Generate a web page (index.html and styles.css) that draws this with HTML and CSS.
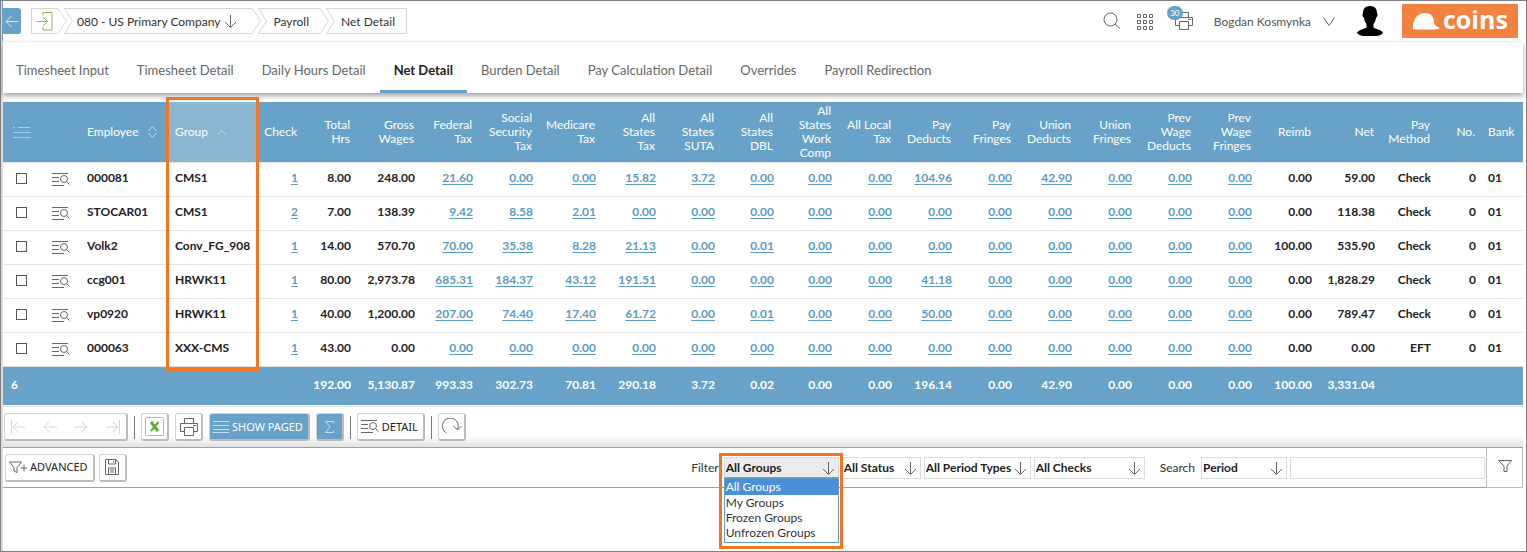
FILE: index.html
```html
<!DOCTYPE html>
<html lang="en">
<head>
<meta charset="utf-8">
<title>Payroll - Net Detail</title>
<link rel="stylesheet" href="styles.css">
</head>
<body>
<svg class="defs" aria-hidden="true">
  <symbol id="down" viewBox="0 0 13 15"><path d="M6.500 1v12M1 8l5.500 5.500L12 8"/></symbol>
  <symbol id="detail" viewBox="0 0 18 13"><path d="M0 .5h16M0 4.500h7M0 8.500h7M0 12.500h12"/><circle cx="12" cy="6" r="3.500"/><path d="M14.500 8.500L17.500 11.500"/></symbol>
  <symbol id="printer" viewBox="0 0 18 18"><path d="M4.500 5V.5h9V5M4.500 13.500h-4V5.500h17v8h-4M4.500 9.500h9v8h-9zM13 7.500h3"/></symbol>
  <symbol id="notch" viewBox="0 0 9 26"><path d="M0 .5h9M0 25.500h9M.5 .5L8.500 13L.5 25.500"/></symbol>
  <symbol id="point" viewBox="0 0 9 26"><path d="M0 .5L8.500 13L0 25.500"/></symbol>
</svg>
<div class="app">
  <header class="topbar">
    <button class="back" aria-label="Back"><svg width="14" height="13" viewBox="0 0 14 13"><path d="M13.500 6.500H1M6.500 1L1 6.500L6.500 12"/></svg></button>
    <nav class="crumbs" aria-label="Breadcrumb">
      <a class="crumb" href="#" aria-label="Home"><span class="crumb-body crumb-home"><svg class="exit" width="16" height="19" viewBox="0 0 16 19"><path d="M6 3.500V.5h9v17.500H6V15M0 9.500h10M6 5l4.500 4.500L6 14"/></svg></span><svg class="cap"><use href="#point"/></svg></a>
      <a class="crumb" href="#"><svg class="cap"><use href="#notch"/></svg><span class="crumb-body crumb-company">080 - US Primary Company<svg width="13" height="15"><use href="#down"/></svg></span><svg class="cap"><use href="#point"/></svg></a>
      <a class="crumb" href="#"><svg class="cap"><use href="#notch"/></svg><span class="crumb-body">Payroll</span><svg class="cap"><use href="#point"/></svg></a>
      <a class="crumb crumb-last" href="#"><svg class="cap"><use href="#notch"/></svg><span class="crumb-body">Net Detail</span></a>
    </nav>
    <div class="tools">
      <button class="plain" aria-label="Search"><svg width="18" height="18" viewBox="0 0 18 18"><circle cx="7.500" cy="7.500" r="6.500"/><path d="M12 12l5 4.500"/></svg></button>
      <button class="plain" aria-label="Applications"><svg width="16" height="17" viewBox="0 0 16 17"><path d="M.5 1.500h3v3h-3zM6.500 1.500h3v3h-3zM12.500 1.500h3v3h-3zM.5 7.500h3v3h-3zM6.500 7.500h3v3h-3zM12.500 7.500h3v3h-3zM.5 13.500h3v3h-3zM6.500 13.500h3v3h-3zM12.500 13.500h3v3h-3z"/></svg></button>
      <button class="plain print-queue" aria-label="Print queue"><svg width="18" height="18"><use href="#printer"/></svg><span class="badge">30</span></button>
      <button class="plain user">Bogdan Kosmynka<svg width="12" height="9" viewBox="0 0 12 9"><path d="M.5 .5L6 8.500L11.500 .5"/></svg></button>
      <svg class="avatar" width="26" height="30" viewBox="0 0 26 30"><path d="M13 0c5 0 7 3 7 7 1 1 .5 4-.8 4.500C18.500 15 17.500 17 16.500 18v3.500c3 2 8 2 9.500 5.500-2 2-4 3-7 3H7c-3 0-5-1-7-3 1.500-3.500 6.500-3.500 9.500-5.500V18c-1-1-2-3-2.700-6.500C5.500 11 5 8 6 7c0-4 2-7 7-7z"/></svg>
      <div class="logo"><svg width="28" height="17" viewBox="0 0 28 17"><path d="M1 16.500C0 7 5 0 13 0c6 0 9 4 9 9.500 0 2 2 4 6 5.500-2 2-8 1.500-14 1.500z"/></svg><span>coins</span></div>
    </div>
  </header>
  <nav class="tabs" aria-label="Payroll sections">
    <a href="#">Timesheet Input</a><a href="#">Timesheet Detail</a><a href="#">Daily Hours Detail</a><a href="#" class="active" aria-current="page">Net Detail</a><a href="#">Burden Detail</a><a href="#">Pay Calculation Detail</a><a href="#">Overrides</a><a href="#">Payroll Redirection</a>
  </nav>
  <main>
    <table class="grid">
      <colgroup><col class="c-check"><col class="c-icon"><col class="c-emp"><col class="c-group"><col class="c-chk"><col class="c-hrs"><col class="c-gross"><col class="c-58"><col class="c-60"><col class="c-63"><col class="c-60"><col class="c-59"><col class="c-59"><col class="c-58"><col class="c-60"><col class="c-60"><col class="c-60"><col class="c-60"><col class="c-60"><col class="c-60"><col class="c-60"><col class="c-60"><col class="c-63"><col class="c-pay"><col class="c-no"><col class="c-bank"></colgroup>
      <thead><tr>
        <th class="mid"><svg class="list" width="18" height="12" viewBox="0 0 18 12"><path d="M0 1.500h2M5 1.500h12M0 6.500h18M0 11.500h18"/></svg></th><th></th>
        <th class="left">Employee<svg class="sort" width="9" height="12" viewBox="0 0 9 12"><path d="M.5 5L4.500 .5L8.500 5M.5 7l4 4.500L8.500 7"/></svg></th>
        <th class="left sorted">Group<svg class="sort" width="9" height="5" viewBox="0 0 9 5"><path d="M.5 4.500l4-4l4 4"/></svg><span class="marker"></span></th>
        <th>Check</th><th>Total<br>Hrs</th><th>Gross<br>Wages</th><th>Federal<br>Tax</th><th>Social<br>Security<br>Tax</th><th>Medicare<br>Tax</th><th>All<br>States<br>Tax</th><th>All<br>States<br>SUTA</th><th>All<br>States<br>DBL</th><th>All<br>States<br>Work<br>Comp</th><th>All Local<br>Tax</th><th>Pay<br>Deducts</th><th>Pay<br>Fringes</th><th>Union<br>Deducts</th><th>Union<br>Fringes</th><th>Prev<br>Wage<br>Deducts</th><th>Prev<br>Wage<br>Fringes</th><th>Reimb</th><th>Net</th><th>Pay<br>Method</th><th>No.</th><th class="left">Bank</th>
      </tr></thead>
      <tbody>
        <tr><td class="mid"><input type="checkbox" aria-label="Select 000081"></td><td class="mid"><svg class="row-icon"><use href="#detail"/></svg></td><td class="left">000081</td><td class="left">CMS1</td><td><a href="#">1</a></td><td>8.00</td><td>248.00</td><td><a href="#">21.60</a></td><td><a href="#">0.00</a></td><td><a href="#">0.00</a></td><td><a href="#">15.82</a></td><td><a href="#">3.72</a></td><td><a href="#">0.00</a></td><td><a href="#">0.00</a></td><td><a href="#">0.00</a></td><td><a href="#">104.96</a></td><td><a href="#">0.00</a></td><td><a href="#">42.90</a></td><td><a href="#">0.00</a></td><td><a href="#">0.00</a></td><td><a href="#">0.00</a></td><td>0.00</td><td>59.00</td><td>Check</td><td>0</td><td class="left">01</td></tr>
        <tr><td class="mid"><input type="checkbox" aria-label="Select STOCAR01"></td><td class="mid"><svg class="row-icon"><use href="#detail"/></svg></td><td class="left">STOCAR01</td><td class="left">CMS1</td><td><a href="#">2</a></td><td>7.00</td><td>138.39</td><td><a href="#">9.42</a></td><td><a href="#">8.58</a></td><td><a href="#">2.01</a></td><td><a href="#">0.00</a></td><td><a href="#">0.00</a></td><td><a href="#">0.00</a></td><td><a href="#">0.00</a></td><td><a href="#">0.00</a></td><td><a href="#">0.00</a></td><td><a href="#">0.00</a></td><td><a href="#">0.00</a></td><td><a href="#">0.00</a></td><td><a href="#">0.00</a></td><td><a href="#">0.00</a></td><td>0.00</td><td>118.38</td><td>Check</td><td>0</td><td class="left">01</td></tr>
        <tr><td class="mid"><input type="checkbox" aria-label="Select Volk2"></td><td class="mid"><svg class="row-icon"><use href="#detail"/></svg></td><td class="left">Volk2</td><td class="left">Conv_FG_908</td><td><a href="#">1</a></td><td>14.00</td><td>570.70</td><td><a href="#">70.00</a></td><td><a href="#">35.38</a></td><td><a href="#">8.28</a></td><td><a href="#">21.13</a></td><td><a href="#">0.00</a></td><td><a href="#">0.01</a></td><td><a href="#">0.00</a></td><td><a href="#">0.00</a></td><td><a href="#">0.00</a></td><td><a href="#">0.00</a></td><td><a href="#">0.00</a></td><td><a href="#">0.00</a></td><td><a href="#">0.00</a></td><td><a href="#">0.00</a></td><td>100.00</td><td>535.90</td><td>Check</td><td>0</td><td class="left">01</td></tr>
        <tr><td class="mid"><input type="checkbox" aria-label="Select ccg001"></td><td class="mid"><svg class="row-icon"><use href="#detail"/></svg></td><td class="left">ccg001</td><td class="left">HRWK11</td><td><a href="#">1</a></td><td>80.00</td><td>2,973.78</td><td><a href="#">685.31</a></td><td><a href="#">184.37</a></td><td><a href="#">43.12</a></td><td><a href="#">191.51</a></td><td><a href="#">0.00</a></td><td><a href="#">0.00</a></td><td><a href="#">0.00</a></td><td><a href="#">0.00</a></td><td><a href="#">41.18</a></td><td><a href="#">0.00</a></td><td><a href="#">0.00</a></td><td><a href="#">0.00</a></td><td><a href="#">0.00</a></td><td><a href="#">0.00</a></td><td>0.00</td><td>1,828.29</td><td>Check</td><td>0</td><td class="left">01</td></tr>
        <tr><td class="mid"><input type="checkbox" aria-label="Select vp0920"></td><td class="mid"><svg class="row-icon"><use href="#detail"/></svg></td><td class="left">vp0920</td><td class="left">HRWK11</td><td><a href="#">1</a></td><td>40.00</td><td>1,200.00</td><td><a href="#">207.00</a></td><td><a href="#">74.40</a></td><td><a href="#">17.40</a></td><td><a href="#">61.72</a></td><td><a href="#">0.00</a></td><td><a href="#">0.01</a></td><td><a href="#">0.00</a></td><td><a href="#">0.00</a></td><td><a href="#">50.00</a></td><td><a href="#">0.00</a></td><td><a href="#">0.00</a></td><td><a href="#">0.00</a></td><td><a href="#">0.00</a></td><td><a href="#">0.00</a></td><td>0.00</td><td>789.47</td><td>Check</td><td>0</td><td class="left">01</td></tr>
        <tr><td class="mid"><input type="checkbox" aria-label="Select 000063"></td><td class="mid"><svg class="row-icon"><use href="#detail"/></svg></td><td class="left">000063</td><td class="left">XXX-CMS</td><td><a href="#">1</a></td><td>43.00</td><td>0.00</td><td><a href="#">0.00</a></td><td><a href="#">0.00</a></td><td><a href="#">0.00</a></td><td><a href="#">0.00</a></td><td><a href="#">0.00</a></td><td><a href="#">0.00</a></td><td><a href="#">0.00</a></td><td><a href="#">0.00</a></td><td><a href="#">0.00</a></td><td><a href="#">0.00</a></td><td><a href="#">0.00</a></td><td><a href="#">0.00</a></td><td><a href="#">0.00</a></td><td><a href="#">0.00</a></td><td>0.00</td><td>0.00</td><td>EFT</td><td>0</td><td class="left">01</td></tr>
      </tbody>
      <tfoot><tr><td class="left">6</td><td></td><td></td><td></td><td></td><td>192.00</td><td>5,130.87</td><td>993.33</td><td>302.73</td><td>70.81</td><td>290.18</td><td>3.72</td><td>0.02</td><td>0.00</td><td>0.00</td><td>196.14</td><td>0.00</td><td>42.90</td><td>0.00</td><td>0.00</td><td>0.00</td><td>100.00</td><td>3,331.04</td><td></td><td></td><td></td></tr></tfoot>
    </table>
    <div class="toolbar">
      <div class="btn pager">
        <button class="plain" aria-label="First page"><svg width="14" height="14" viewBox="0 0 14 14"><path d="M.5 0v14M14 7H2M7 2L2 7l5 5"/></svg></button>
        <button class="plain" aria-label="Previous page"><svg width="14" height="14" viewBox="0 0 14 14"><path d="M14 7H1M6 2L1 7l5 5"/></svg></button>
        <button class="plain" aria-label="Next page"><svg width="14" height="14" viewBox="0 0 14 14"><path d="M0 7h13M8 2l5 5l-5 5"/></svg></button>
        <button class="plain" aria-label="Last page"><svg width="14" height="14" viewBox="0 0 14 14"><path d="M13.500 0v14M0 7h12M7 2l5 5l-5 5"/></svg></button>
      </div>
      <span class="sep"></span>
      <button class="btn square" aria-label="Export to Excel"><svg width="19" height="19" viewBox="0 0 19 19"><rect class="xl-frame" x=".5" y=".5" width="18" height="18" rx="1"/><path class="xl-a" d="M6 5l7 9"/><path class="xl-b" d="M13.500 5L6 14"/></svg></button>
      <button class="btn square" aria-label="Print"><svg width="18" height="18"><use href="#printer"/></svg></button>
      <button class="btn blue paged"><svg width="16" height="12" viewBox="0 0 16 12"><path d="M0 .5h16M0 4.500h16M0 8.500h16M0 11.500h16"/></svg>SHOW PAGED</button>
      <button class="btn blue square" aria-label="Totals"><svg width="9" height="12" viewBox="0 0 9 12"><path d="M8.500 2.500v-2H.5L5 6L.5 11.500h8v-2"/></svg></button>
      <span class="sep"></span>
      <button class="btn"><svg width="18" height="13"><use href="#detail"/></svg>DETAIL</button>
      <span class="sep"></span>
      <button class="btn square" aria-label="Refresh"><svg width="21" height="17" viewBox="0 0 21 17"><path d="M5.500 15A8 8 0 1 1 16.500 11.500M12.500 8l4 4l4-4"/></svg></button>
    </div>
    <form class="filterbar">
      <button type="button" class="btn advanced"><svg width="18" height="12" viewBox="0 0 18 12"><path d="M.5 1h12L8 6.500v5L5 10V6.500zM15 3.500v7M11.500 7h6.500"/></svg>ADVANCED</button>
      <button type="button" class="btn square" aria-label="Save filter"><svg width="14" height="16" viewBox="0 0 14 16"><path d="M.5 .5h10L13.500 3v12.500H.5zM3.500 .5V5h7V.5M3.500 15.500V9h7v6.500M5 11h4M5 13h4M8.500 2v1.500"/></svg></button>
      <div class="filters">
        <label for="groups">Filter</label>
        <span class="select w-groups open"><select id="groups"><option>All Groups</option><option>My Groups</option><option>Frozen Groups</option><option>Unfrozen Groups</option></select><svg><use href="#down"/></svg>
          <ul class="menu"><li class="chosen">All Groups</li><li>My Groups</li><li>Frozen Groups</li><li>Unfrozen Groups</li></ul><span class="marker"></span></span>
        <span class="select w-status"><select aria-label="Status"><option>All Status</option></select><svg><use href="#down"/></svg></span>
        <span class="select w-types"><select aria-label="Period types"><option>All Period Types</option></select><svg><use href="#down"/></svg></span>
        <span class="select w-checks"><select aria-label="Checks"><option>All Checks</option></select><svg><use href="#down"/></svg></span>
        <label for="by" class="search-label">Search</label>
        <span class="select w-by"><select id="by"><option>Period</option></select><svg><use href="#down"/></svg></span>
        <input type="text" class="query" aria-label="Search text">
      </div>
      <button type="button" class="funnel" aria-label="Apply filter"><svg width="14" height="12" viewBox="0 0 14 12"><path d="M.5 .5h13L9 6v5.500H6V6z"/></svg></button>
    </form>
  </main>
</div>
</body>
</html>
```
FILE: styles.css
```css
* { box-sizing: border-box; }
body {
  margin: 0;
  font-family: Lato, "Open Sans", sans-serif;
  font-size: 12px;
  color: #333;
  background: #fff;
}
a { color: inherit; text-decoration: none; }
button { font: inherit; color: inherit; margin: 0; cursor: pointer; }
svg { fill: none; stroke: #666; stroke-width: 1; flex: none; }
.defs { display: none; }
.plain { border: 0; background: none; padding: 0; display: flex; align-items: center; }

.app {
  min-height: 100vh;
  border: 1px solid #808080;
  padding: 0 3px 0 2px;
  background: linear-gradient(to right, #dcdcdc 2px, #fff 2px);
}

/* Top bar */
.topbar {
  display: flex;
  align-items: center;
  height: 41px;
  margin-left: -1px;
  padding-right: 5px;
  border-left: 1px solid #68a2c8;
  border-bottom: 1px solid #f3f3f3;
}
.back {
  width: 18px;
  height: 26px;
  padding: 0;
  border: 0;
  border-radius: 0 3px 3px 0;
  background: #68a2c8;
  display: flex;
  align-items: center;
  justify-content: center;
}
.back svg { stroke: #d9ecf7; }
.crumbs { display: flex; margin-left: 10px; }
.crumb { display: flex; height: 26px; }
.crumb + .crumb { margin-left: -3px; }
.cap { width: 9px; height: 26px; stroke: #d6d6d6; }
.crumb-body {
  display: flex;
  align-items: center;
  border: solid #d6d6d6;
  border-width: 1px 0;
  padding: 0 11px 0 6px;
}
.crumb-home { border-left-width: 1px; padding: 0 5px; }
.exit { stroke: #8db46a; }
.crumb-company { padding: 0 15px 0 4px; gap: 4px; }
.crumb-last .crumb-body { border-right-width: 1px; }

.tools { display: flex; align-items: center; margin-left: auto; color: #555; }
.print-queue { position: relative; }
.tools .plain + .plain { margin-left: 16px; }
.tools .plain + .print-queue { margin-left: 22px; }
.tools .plain + .user { margin-left: 21px; gap: 12px; }
.badge {
  position: absolute;
  left: -8px;
  top: -6px;
  width: 16px;
  height: 14px;
  border-radius: 7px;
  background: #68a2c8;
  color: #fff;
  font-size: 8px;
  line-height: 14px;
  text-align: center;
}
.avatar { margin-left: 22px; fill: #000; stroke: none; }
.logo {
  display: flex;
  align-items: center;
  gap: 3px;
  width: 116px;
  height: 34px;
  margin-left: 19px;
  padding-left: 10px;
  background: #f28240;
  color: #fff;
  font: bold 25px/30px "Open Sans", "Noto Sans", sans-serif;
}
.logo svg { fill: #fff; stroke: none; }
.logo span { padding-bottom: 4px; }

/* Section tabs */
.tabs {
  display: flex;
  height: 51px;
  font-size: 13px;
  color: #666;
  box-shadow: 0 3px 5px rgba(0, 0, 0, .35);
}
.tabs a {
  padding: 0 14px;
  line-height: 57px;
  height: 51px;
  border-bottom: 3px solid transparent;
}
.tabs a:first-child { padding-left: 13px; }
.tabs .active { color: #222; font-weight: bold; border-color: #68a2c8; }

/* Data grid */
.grid {
  width: 100%;
  margin-top: 9px;
  table-layout: fixed;
  border-collapse: separate;
  border-spacing: 0;
}
.c-check { width: 40px; }
.c-icon { width: 36px; }
.c-emp { width: 88px; }
.c-group { width: 92px; }
.c-chk { width: 43px; }
.c-hrs { width: 53px; }
.c-gross { width: 64px; }
.c-58 { width: 58px; }
.c-59 { width: 59px; }
.c-60 { width: 60px; }
.c-63 { width: 63px; }
.c-pay { width: 56px; }
.c-no { width: 45px; }
.c-bank { width: 43px; }
.grid th {
  height: 60px;
  padding: 0 5px 1px 0;
  background: #68a2c8;
  color: #fff;
  font-weight: normal;
  line-height: 14px;
  text-align: right;
  white-space: nowrap;
}
.grid td {
  height: 34px;
  padding: 0 4px 3px 0;
  border-top: 1px solid #e4e4e4;
  color: #222;
  font-weight: bold;
  line-height: 16px;
  text-align: right;
  white-space: nowrap;
}
.grid .left { padding-left: 8px; padding-right: 0; text-align: left; }
.grid .mid { padding-left: 0; padding-right: 3px; text-align: center; }
.grid td a {
  color: #5c9cc5;
  text-decoration: underline;
  text-underline-offset: 2px;
}
.grid th.sorted { position: relative; background: #8ab6d1; }
.grid tfoot td {
  height: 39px;
  padding-bottom: 2px;
  background: #68a2c8;
  color: #fff;
}
.grid input {
  appearance: none;
  display: block;
  width: 11px;
  height: 11px;
  margin: 0 auto;
  border: 1px solid #555;
  background: #fff;
}
.list { stroke: #a9cde4; vertical-align: middle; }
.sort { stroke: #c3dcec; margin-left: 9px; vertical-align: middle; }
.row-icon { display: block; width: 18px; height: 13px; margin: 3px 0 0 9px; }
.marker {
  position: absolute;
  z-index: 3;
  border: 3px solid #f47521;
  pointer-events: none;
}
.sorted .marker { left: -1px; right: 0; top: -5px; height: 274px; }

/* Action toolbar */
.toolbar {
  display: flex;
  align-items: center;
  gap: 6px;
  height: 42px;
  margin-top: 1px;
  padding: 0 1px;
  border-top: 1px solid #e4e4e4;
  border-bottom: 1px solid #a0a0a0;
  background: linear-gradient(#fff 70%, #e2e2e2);
}
.btn {
  display: flex;
  align-items: center;
  justify-content: center;
  gap: 3px;
  height: 28px;
  padding: 0 5px 0 3px;
  border: 1px solid #d4d4d4;
  border-right: 2px solid #bbb;
  border-bottom: 2px solid #bbb;
  border-radius: 3px;
  background: #fff;
  color: #222;
  font: 11px/14px "Noto Sans", "Open Sans", sans-serif;
}
.square { width: 28px; padding: 0; }
.blue { background: #68a2c8; color: #fff; }
.blue svg { stroke: #c6dfef; }
.pager { width: 124px; justify-content: space-between; padding: 0 6px; }
.pager svg { stroke: #d4d4d4; }
.sep { width: 1px; height: 23px; background: #777; }
.xl-frame { stroke: #97cc7c; }
.xl-a { stroke: #5fae35; stroke-width: 3; }
.xl-b { stroke: #5fae35; stroke-width: 2; }

/* Filter bar */
.filterbar {
  display: flex;
  align-items: center;
  gap: 4px;
  height: 40px;
  padding-left: 2px;
  border-bottom: 1px solid #a0a0a0;
}
.filters { display: flex; align-items: center; gap: 3px; margin-left: auto; }
.filters label { margin-right: 2px; }
.filters .search-label { margin-left: 12px; margin-right: 3px; }
.select { position: relative; display: block; height: 22px; }
.select select {
  appearance: none;
  display: block;
  width: 100%;
  height: 22px;
  padding: 0 0 0 1px;
  border: 1px solid #dcdcdc;
  border-radius: 0;
  background: #fff;
  color: #222;
  font: bold 12px Lato, sans-serif;
}
.select > svg { position: absolute; right: 4px; top: 4px; width: 13px; height: 15px; }
.open select { background: #ececec; border-bottom: 2px solid #68a2c8; }
.w-groups { width: 115px; }
.w-status { width: 79px; }
.w-types { width: 107px; }
.w-checks { width: 111px; }
.w-by { width: 86px; }
.query { width: 195px; height: 22px; border: 1px solid #dcdcdc; font: 12px Lato, sans-serif; }
.menu {
  position: absolute;
  z-index: 2;
  left: 0;
  right: 0;
  top: 21px;
  height: 65px;
  margin: 0;
  padding: 0;
  border: 1px solid #5c9cc5;
  background: #fff;
  list-style: none;
}
.menu li { padding-left: 1px; line-height: 15px; }
.menu .chosen { background: #4a90d9; color: #fff; line-height: 16px; }
.open .marker { left: -5px; right: -4px; top: -4px; height: 96px; }
.funnel {
  align-self: stretch;
  width: 37px;
  margin-left: -3px;
  margin-bottom: -1px;
  padding: 0;
  border: 1px solid #bbb;
  border-top: 0;
  background: #fff;
}
```
